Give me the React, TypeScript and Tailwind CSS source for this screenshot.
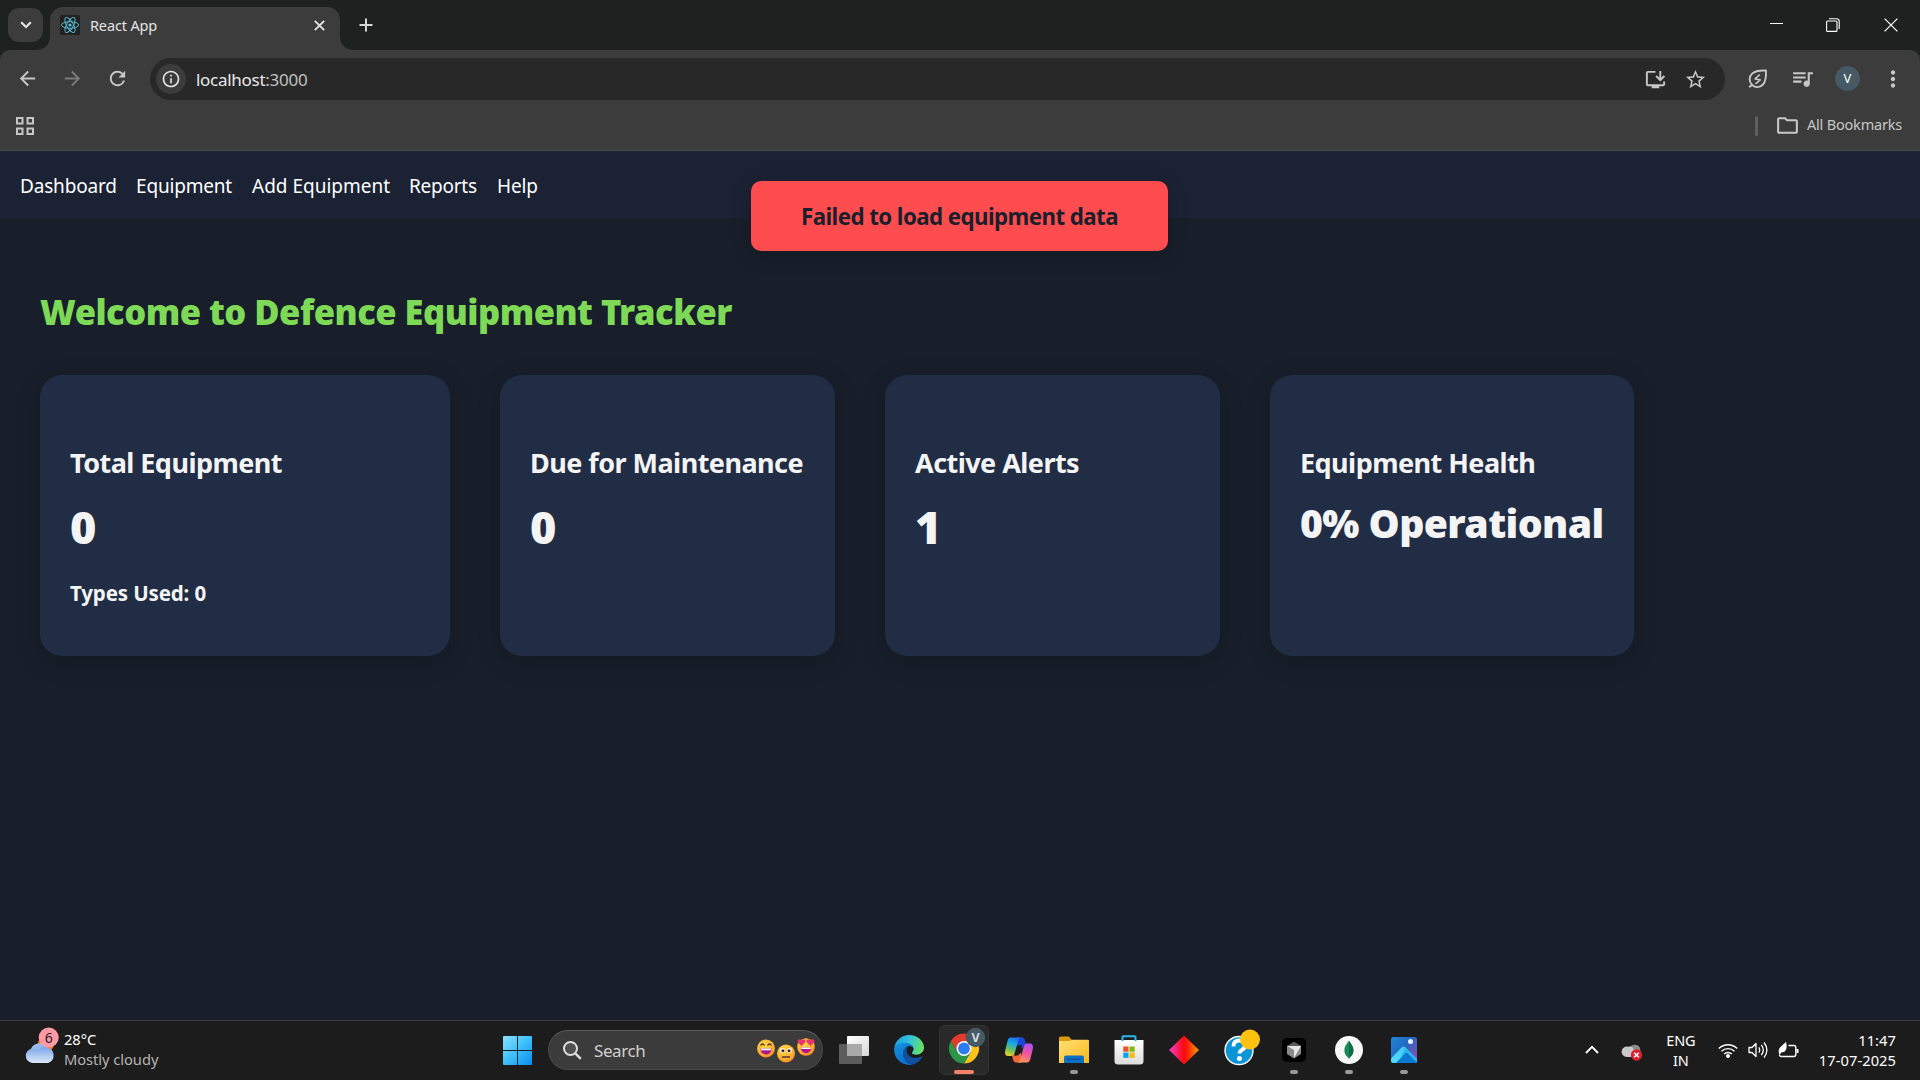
import React from "react";
import {
  MdArrowBack,
  MdArrowForward,
  MdRefresh,
  MdInfoOutline,
  MdOutlineInstallDesktop,
  MdStarBorder,
  MdQueueMusic,
  MdMoreVert,
  MdOutlineFolder,
} from "react-icons/md";

function ReactLogo() {
  return (
    <svg className="h-5 w-5 shrink-0" viewBox="0 0 20 20" fill="none" stroke="#58c4dc" strokeWidth="0.9">
      <rect width="20" height="20" rx="1.5" fill="#222222" stroke="none" />
      <ellipse cx="10" cy="10" rx="8.6" ry="3.3" />
      <ellipse cx="10" cy="10" rx="8.6" ry="3.3" transform="rotate(60 10 10)" />
      <ellipse cx="10" cy="10" rx="8.6" ry="3.3" transform="rotate(120 10 10)" />
      <circle cx="10" cy="10" r="1.6" fill="#58c4dc" stroke="none" />
    </svg>
  );
}

function TabStrip() {
  return (
    <div className="flex h-[50px] items-start bg-[#1f2120] text-[#e3e3e3]">
      <div className="ml-2 mt-2 flex h-[34px] w-[35px] items-center justify-center rounded-[11px] bg-[#3c3c3c]">
        <svg className="h-[8px] w-[12px]" viewBox="0 0 12 8" fill="none" stroke="#e3e3e3" strokeWidth="2.2">
          <path d="M1.2 1.2 6 6l4.800-4.800" />
        </svg>
      </div>
      <svg className="mt-[35px] -ml-[8px] h-[15px] w-[15px]" viewBox="0 0 15 15">
        <path d="M15 0v15H0Q15 15 15 0Z" fill="#3c3c3c" />
      </svg>
      <div className="mt-[7px] flex h-[43px] w-[290px] items-center rounded-t-[13px] bg-[#3c3c3c] pb-[7px] pl-[10px]">
        <ReactLogo />
        <span className="mt-px ml-[10px] text-[14.5px] tracking-[-0.15px]">React App</span>
        <svg className="ml-auto mr-[15px] h-[11px] w-[11px]" viewBox="0 0 11 11" stroke="#e3e3e3" strokeWidth="1.900">
          <path d="m.8.8 9.400 9.400M10.200.8.8 10.200" />
        </svg>
      </div>
      <svg className="mt-[35px] h-[15px] w-[15px]" viewBox="0 0 15 15">
        <path d="M0 0v15h15Q0 15 0 0Z" fill="#3c3c3c" />
      </svg>
      <svg className="mt-[18px] ml-[4px] h-[14px] w-[14px]" viewBox="0 0 14 14" stroke="#d6d6d6" strokeWidth="2">
        <path d="M7 .5v13M.5 7h13" />
      </svg>
      <div className="ml-auto mr-[22px] flex h-[50px] items-center">
        <svg className="h-[14px] w-[13px]" viewBox="0 0 13 14" stroke="#fff" strokeWidth="1">
          <path d="M0 5.500h13" />
        </svg>
        <svg className="ml-[43px] h-[14px] w-[14px]" viewBox="0 0 14 14" fill="none" stroke="#fff" strokeWidth="1.100">
          <rect x=".6" y="3" width="10.400" height="10.400" rx="1" />
          <path d="M3 .8h7.500a2.700 2.700 0 0 1 2.700 2.700V11" />
        </svg>
        <svg className="ml-[44px] h-[14px] w-[14px]" viewBox="0 0 14 14" stroke="#fff" strokeWidth="1.200">
          <path d="m.6.6 12.800 12.800M13.400.6.6 13.400" />
        </svg>
      </div>
    </div>
  );
}

function EnergyLeaf() {
  return (
    <svg className="h-5 w-5" viewBox="0 0 20 20" fill="none" stroke="#c7c7c7" strokeWidth="1.900">
      <path d="M1.200 18.300 4 15.800" />
      <path d="M4 15.800C.6 12.500 1 7.500 4.100 4.600 7.200 1.800 12 1.200 17.900 1.500c.4 5.900-.1 10.800-2.900 14-2.900 3.200-7.700 3.600-11 .3Z" />
      <path d="m11.800 5.600-5 4.400 5.700.7-5 4.200" strokeWidth="1.600" strokeLinejoin="bevel" />
    </svg>
  );
}

function Toolbar() {
  return (
    <div className="bg-[#1f2120]">
      <div className="flex h-[58px] items-center rounded-t-[10px] bg-[#3c3c3c] text-[#c7c7c7]">
        <MdArrowBack className="-mt-px ml-[16px] size-[23px]" />
        <MdArrowForward className="-mt-px ml-[22px] size-[23px] text-[#7a7a7a]" />
        <MdRefresh className="-mt-px ml-[22px] size-[23px]" />
        <div className="ml-[21px] flex h-[42px] w-[1575px] items-center rounded-full bg-[#282828] pl-[6px]">
          <div className="flex size-[30px] items-center justify-center rounded-full bg-[#3c3c3c]">
            <MdInfoOutline className="size-[20px] text-[#e3e3e3]" />
          </div>
          <span className="mt-px ml-[10px] text-[17px] tracking-[-0.28px] text-[#c0c0c0]">
            <span className="text-[#e8e8e8]">localhost</span>:3000
          </span>
          <MdOutlineInstallDesktop className="ml-auto size-[23px]" />
          <MdStarBorder className="mr-[18px] ml-[17px] size-[23px]" />
        </div>
        <div className="-mt-px ml-[23px]">
          <EnergyLeaf />
        </div>
        <MdQueueMusic className="-mt-[2px] ml-[22px] size-[25px]" />
        <div className="-mt-px ml-[20px] flex size-[25px] items-center justify-center rounded-full bg-[#455a64] text-[13px] text-white">
          V
        </div>
        <MdMoreVert className="-mt-px ml-[20px] size-[26px]" />
      </div>
      <div className="flex h-[43px] items-center border-b border-[#4a4a4a] bg-[#3c3c3c] pb-[12px] text-[#c7c7c7]">
        <svg className="mt-[5px] ml-[16px] h-[18px] w-[18px]" viewBox="0 0 18 18" fill="none" stroke="#c7c7c7" strokeWidth="2">
          <rect x="1" y="1" width="5.500" height="5.500" />
          <rect x="11.500" y="1" width="5.500" height="5.500" />
          <rect x="1" y="11.500" width="5.500" height="5.500" />
          <rect x="11.500" y="11.500" width="5.500" height="5.500" />
        </svg>
        <div className="mt-[5px] ml-auto h-[20px] w-[3px] rounded-full bg-[#5f5f5f]" />
        <MdOutlineFolder className="mt-[5px] ml-[17px] size-[25px]" />
        <span className="mt-[4px] mr-[18px] ml-[7px] text-[14.5px] tracking-[-0.2px]">All Bookmarks</span>
      </div>
    </div>
  );
}

function Toast() {
  return (
    <div className="absolute top-[30px] left-[751px] flex h-[70px] w-[417px] items-center justify-center rounded-[10px] bg-[#ff4d4f] pt-px text-[22.3px] font-bold tracking-[-0.57px] whitespace-nowrap text-[#1a1f2b] shadow-[0_4px_20px_rgba(0,0,0,0.2)]">
      Failed to load equipment data
    </div>
  );
}

function NavBar() {
  return (
    <nav className="flex h-[67px] items-center gap-5 bg-[#1a2234] px-5 pt-[3px] text-[19px] tracking-[-0.18px] whitespace-nowrap text-white">
      <a className="w-[96px]">Dashboard</a>
      <a className="w-[96px]">Equipment</a>
      <a className="w-[137px] tracking-[0px]">Add Equipment</a>
      <a className="w-[68px] tracking-[-0.25px]">Reports</a>
      <a className="w-[41px]">Help</a>
    </nav>
  );
}

const cardClass =
  "h-[281px] rounded-[22px] bg-[#212d45] px-[30px] pt-[68px] whitespace-nowrap text-[#f4f4f4] shadow-[0_6px_24px_rgba(0,0,0,0.18)]";
const titleClass = "text-[27px] leading-[40px] font-bold tracking-[-0.54px]";
const numberClass = "mt-[14px] text-[45px] leading-[60px] font-black";

function Dashboard() {
  return (
    <main className="h-[802px] bg-[#181f2a] px-10 pt-[69px]">
      <h1 className="text-[34.500px] leading-[50px] font-black tracking-[-0.5px] text-[#7ed957]">
        Welcome to Defence Equipment Tracker
      </h1>
      <div className="mt-[38px] flex gap-[50px]">
        <section className={`${cardClass} w-[410px]`}>
          <h2 className={titleClass}>Total Equipment</h2>
          <p className={numberClass}>0</p>
          <p className="mt-[21px] text-[20.500px] leading-[30px] font-bold tracking-[-0.13px]">Types Used: 0</p>
        </section>
        <section className={`${cardClass} w-[335px]`}>
          <h2 className={titleClass}>Due for Maintenance</h2>
          <p className={numberClass}>0</p>
        </section>
        <section className={`${cardClass} w-[335px]`}>
          <h2 className={titleClass}>Active Alerts</h2>
          <p className={numberClass}>1</p>
        </section>
        <section className={`${cardClass} w-[364px]`}>
          <h2 className={titleClass}>Equipment Health</h2>
          <p className="mt-[13px] text-[39.200px] leading-[54px] font-black tracking-[-0.6px]">0% Operational</p>
        </section>
      </div>
    </main>
  );
}

function Weather() {
  return (
    <div className="flex items-start pt-[6px] pl-[24px]">
      <svg className="h-[37px] w-[36px]" viewBox="0 0 36 37">
        <defs>
          <linearGradient id="cloud" x1="0" y1="0" x2="0" y2="1">
            <stop offset="0" stopColor="#7ba6ea" />
            <stop offset="1" stopColor="#dbe8fb" />
          </linearGradient>
          <linearGradient id="cloudBack" x1="0" y1="0" x2="1" y2="1">
            <stop offset="0" stopColor="#a9c8f5" />
            <stop offset="1" stopColor="#6d97e0" />
          </linearGradient>
        </defs>
        <circle cx="22" cy="17" r="8" fill="#f7730c" />
        <path d="M6 25a10 10 0 0 1 18.500-4L27 30H8Z" fill="url(#cloudBack)" />
        <path d="M8.500 36a7.200 7.200 0 0 1-.6-14.300c2.500-.2 4.600.4 6.300 2A9.500 9.500 0 0 1 23 20.500a8 8 0 0 1 1 15.500Z" fill="url(#cloud)" />
        <circle cx="24.700" cy="10.500" r="10" fill="#ff99a4" />
        <text x="24.700" y="15.800" fontSize="14" textAnchor="middle" fill="#1c1c1c">6</text>
      </svg>
      <div className="mt-[2px] ml-[4px] text-[14.700px] leading-[20px] tracking-[-0.05px]">
        <div className="text-white">28°C</div>
        <div className="text-[#b4b4b4]">Mostly cloudy</div>
      </div>
    </div>
  );
}

function WindowsLogo() {
  return (
    <svg className="h-[29px] w-[29px]" viewBox="0 0 29 29">
      <defs>
        <linearGradient id="win" x1="0" y1="0" x2="29" y2="29" gradientUnits="userSpaceOnUse">
          <stop offset="0" stopColor="#8ae0ff" />
          <stop offset=".5" stopColor="#3cc0fb" />
          <stop offset="1" stopColor="#0a8cf0" />
        </linearGradient>
      </defs>
      <path d="M0 1q0-1 1-1h13v14H0ZM15 0h13q1 0 1 1v13H15ZM0 15h14v14H1q-1 0-1-1ZM15 15h14v13q0 1-1 1H15Z" fill="url(#win)" />
    </svg>
  );
}

function Emojis() {
  return (
    <svg className="h-[26px] w-[60px]" viewBox="0 0 60 26">
      <defs>
        <radialGradient id="face" cx=".4" cy=".3" r=".8">
          <stop offset="0" stopColor="#ffd84a" />
          <stop offset=".7" stopColor="#fbab2c" />
          <stop offset="1" stopColor="#f0722e" />
        </radialGradient>
      </defs>
      <circle cx="10" cy="10.500" r="9" fill="url(#face)" />
      <path d="M4.500 10.500h11c0 8-11 8-11 0Z" fill="#b4128c" />
      <path d="M5 10.500h10v1.800H5Z" fill="#fff" />
      <path d="M4.500 7.500q2-3 4 0M11.500 7.500q2-3 4 0" fill="none" stroke="#4b2b2e" strokeWidth="1.300" />
      <circle cx="30" cy="15.500" r="9" fill="url(#face)" />
      <circle cx="26.500" cy="12.500" r="2.400" fill="#fff" />
      <circle cx="33.500" cy="12.500" r="2.400" fill="#fff" />
      <circle cx="26.900" cy="12.700" r="1.500" fill="#3c2528" />
      <circle cx="33.100" cy="12.700" r="1.500" fill="#3c2528" />
      <path d="M26 19h8" stroke="#5a3330" strokeWidth="1.500" />
      <circle cx="50" cy="9" r="8.800" fill="url(#face)" />
      <path d="M44.800 9.500h10.400c0 7.500-10.400 7.500-10.400 0Z" fill="#b4128c" />
      <path d="M45.300 9.500h9.400v1.600h-9.400Z" fill="#fff" />
      <path d="M45.500 8 41.800 4.200C40.500 1.500 44 0 45.500 2.200 47.300 0 50.500 1.500 49.200 4.200ZM54.500 8l-3.700-3.800C49.500 1.500 53 0 54.500 2.200 56.300 0 59.500 1.500 58.200 4.200Z" fill="#f0306a" />
    </svg>
  );
}

function SearchBox() {
  return (
    <div className="flex h-[40px] w-[275px] items-center rounded-full border border-[#4a4a4a] border-t-[#5c5c5c] bg-[#3b3b3b] pl-[14px]">
      <svg className="h-[19px] w-[19px]" viewBox="0 0 19 19" fill="none" stroke="#dedede" strokeWidth="2">
        <circle cx="7.500" cy="7.500" r="6.500" fill="#505050" />
        <path d="m12.300 12.300 5.500 5.500" strokeWidth="2.400" />
      </svg>
      <span className="mt-px ml-[12px] text-[17px] tracking-[-0.4px] text-[#d0d0d0]">Search</span>
      <div className="mt-[1px] mr-[6px] ml-auto">
        <Emojis />
      </div>
    </div>
  );
}

function TaskView() {
  return (
    <svg className="h-[30px] w-[32px]" viewBox="0 0 32 30">
      <defs>
        <linearGradient id="tv" x1="0" y1="0" x2="1" y2="1">
          <stop offset="0" stopColor="#fff" />
          <stop offset="1" stopColor="#d6d6d6" />
        </linearGradient>
      </defs>
      <rect x="1" y="9" width="23" height="20" rx="1" fill="#5c5c5c" />
      <rect x="9" y="1" width="22" height="20" rx="1" fill="url(#tv)" />
      <path d="M9 9h15v12H9Z" fill="#a9a9a9" />
    </svg>
  );
}

function Edge() {
  return (
    <svg className="h-[30px] w-[30px]" viewBox="0 0 30 30">
      <defs>
        <linearGradient id="edgeTop" x1="0" y1=".4" x2="1" y2=".6">
          <stop offset="0" stopColor="#1f9fe0" />
          <stop offset=".5" stopColor="#36c6d6" />
          <stop offset="1" stopColor="#6be35a" />
        </linearGradient>
        <linearGradient id="edgeLeft" x1="0" y1="0" x2=".5" y2="1">
          <stop offset="0" stopColor="#1592dd" />
          <stop offset="1" stopColor="#0a6fd0" />
        </linearGradient>
      </defs>
      <path d="M.3 12.500C1.500 5.500 7.500 0 15 0c8.500 0 15 6 15 12.500 0 4.500-3.500 7.200-7.500 7.200-3.400 0-5-1-4.600-2.200.5-1.100 1.500-1.700 1.500-4 0-2-2.500-4.700-7-4.700C6.500 8.800 2.500 11 .3 12.500Z" fill="url(#edgeTop)" />
      <path d="M.2 13C2 9.500 6.200 7.800 11 7.800c4.800 0 8.400 2.700 8.400 5.700-1-1.500-2.500-2.400-4.400-2.400C11 11.500 9 16 9.500 20c.6 4.500 4 8.500 8.500 9.700C8.500 31.500-.8 24 .2 13Z" fill="url(#edgeLeft)" />
      <path d="M13.300 11.500C9.500 13 8.300 17.500 9.300 21.500c1 4 4.200 7.400 8.700 8.200 4.500-.9 8.200-3.700 10.200-7.400.3-.6-.2-1-.8-.7-5.900 2.900-14 .9-14.400-5.700 0-1.700.7-3.400 2-4.500Z" fill="#11509f" />
      <path d="M14.700 11.300c2.600-.3 4.700 1.300 4.700 2.900 0 1.800-1.300 2.500-1.500 3.400-1.500 1.800-1 2.900-.5 4.100-5.200-2.200-6.200-8.200-2.700-10.400Z" fill="#1c1c1c" />
    </svg>
  );
}

function Chrome() {
  return (
    <svg className="h-[38px] w-[38px]" viewBox="0 0 38 38">
      <g transform="translate(16 21.500)">
        <path d="M-13-7.500A15 15 0 0 1 13-7.500L0-7.500-6.500 3.750Z" fill="#e33b2e" />
        <path d="M13-7.500A15 15 0 0 1 0 15L6.500 3.750 0-7.500Z" fill="#fcc21b" />
        <path d="M0 15A15 15 0 0 1-13-7.500L-6.500 3.750 0 7.500 6.500 3.750Z" fill="#2b9648" />
        <circle r="7.500" fill="#fff" />
        <circle r="5.900" fill="#2c7bf0" />
      </g>
      <circle cx="27.500" cy="10.500" r="9.700" fill="#455a64" />
      <text x="27.500" y="15" fontSize="12.500" fontWeight="700" textAnchor="middle" fill="#d5dce0">V</text>
    </svg>
  );
}

function Copilot() {
  return (
    <svg className="h-[28px] w-[30px]" viewBox="0 0 30 28">
      <defs>
        <linearGradient id="cpA" x1=".6" y1="0" x2=".3" y2="1">
          <stop offset="0" stopColor="#1b6ef0" />
          <stop offset=".35" stopColor="#18a9e2" />
          <stop offset=".7" stopColor="#6fc15d" />
          <stop offset="1" stopColor="#e9cf2a" />
        </linearGradient>
        <linearGradient id="cpB" x1=".7" y1="0" x2=".3" y2="1">
          <stop offset="0" stopColor="#b04ff0" />
          <stop offset=".5" stopColor="#f0569a" />
          <stop offset="1" stopColor="#ff9a5a" />
        </linearGradient>
      </defs>
      <path d="M13 1.500h5c2.500 0 3 2 3.700 6H26l-9 5-5-3Z" fill="#1b45d4" />
      <path d="M8 19c.8 5 1.500 7.500 4.500 7.500h5.500L17 17Z" fill="#f2663a" />
      <path d="m13 9.500 5-.5-3 10-4.500 1Z" fill="#1c1c1c" />
      <path d="M7 1.500h11c-2.500 0-3.300 1.500-4 4l-3 10.500c-.8 2.800-1.800 4-4.500 4H4C1.500 20 .5 18 1.200 14.500L3.500 5C4.200 2.500 5 1.500 7 1.500Z" fill="url(#cpA)" />
      <path d="M23 26.500H12.500c2.500 0 3.200-1.500 4-4L19.300 12c.7-2.700 1.700-4.500 4.300-4.500H26c2.500 0 3.500 2 2.800 5.500L26.500 22.500c-.7 2.800-1.500 4-3.500 4Z" fill="url(#cpB)" />
    </svg>
  );
}

function Explorer() {
  return (
    <svg className="h-[28px] w-[30px]" viewBox="0 0 30 28">
      <defs>
        <linearGradient id="fold" x1="0" y1="0" x2="1" y2="1">
          <stop offset="0" stopColor="#ffe07a" />
          <stop offset="1" stopColor="#fbb917" />
        </linearGradient>
      </defs>
      <path d="M0 2Q0 .5 1.500.5h8.200L13 4H30v8H0Z" fill="#dc9a09" />
      <path d="M0 5h10.500L13 3.800h15.500q1.500 0 1.500 1.500V27H0Z" fill="url(#fold)" />
      <path d="M5 27v-5.500q0-2 2-2h16q2 0 2 2V27Z" fill="#0c70c8" />
      <path d="M8.500 23.200h13" stroke="#084b8a" strokeWidth="1.200" />
    </svg>
  );
}

function Store() {
  return (
    <svg className="h-[30px] w-[30px]" viewBox="0 0 30 30">
      <defs>
        <linearGradient id="st" x1="0" y1="0" x2="0" y2="1">
          <stop offset="0" stopColor="#fff" />
          <stop offset="1" stopColor="#dcdcdc" />
        </linearGradient>
      </defs>
      <path d="M.5 5h29V26q0 3.500-3.500 3.500H4Q.5 29.500.5 26Z" fill="url(#st)" />
      <path d="M8.500 6V2q0-.8.800-.8h11.400q.8 0 .8.800v4" fill="none" stroke="#2bb5ec" strokeWidth="2" />
      <path d="M9.300 11.500h5.200v5.200H9.300Z" fill="#f04f25" />
      <path d="M15.500 11.500h5.200v5.200h-5.200Z" fill="#80ba08" />
      <path d="M9.300 17.600h5.200v5.200H9.300Z" fill="#06a4ee" />
      <path d="M15.500 17.600h5.200v5.200h-5.200Z" fill="#feb906" />
    </svg>
  );
}

function Diamond() {
  return (
    <svg className="h-[30px] w-[30px]" viewBox="0 0 30 30">
      <defs>
        <linearGradient id="dia">
          <stop offset="0" stopColor="#f43fd0" />
          <stop offset=".48" stopColor="#fb0a12" />
          <stop offset=".6" stopColor="#fa1a08" />
          <stop offset="1" stopColor="#ff9d00" />
        </linearGradient>
      </defs>
      <path d="m15 .5 15 14.500-15 14.500L0 15Z" fill="url(#dia)" />
    </svg>
  );
}

function HelpIcon() {
  return (
    <svg className="h-[37px] w-[36px]" viewBox="0 0 36 37">
      <circle cx="15" cy="21.500" r="14" fill="#0a95d6" stroke="#fff" strokeWidth="1.400" />
      <path d="M9.500 17.500q0-6 5.800-6t5.700 4.900q0 2.800-3 4.500-2.500 1.400-2.500 3.600" fill="none" stroke="#fff" strokeWidth="3.800" />
      <circle cx="15.400" cy="29.500" r="2.500" fill="#fff" />
      <circle cx="26" cy="10.500" r="10" fill="#ffc20e" />
    </svg>
  );
}

function CursorApp() {
  return (
    <svg className="h-[26px] w-[26px]" viewBox="0 0 26 26">
      <rect x="1" y="1" width="24" height="24" rx="5" fill="#000" />
      <path d="m13 5 7 4v8l-7 4.500L6 17V9Z" fill="#8a8a8a" />
      <path d="m13 5 7 4-7 3-7-3Z" fill="#5a5a5a" />
      <path d="M6 9h14l-7 12v-8Z" fill="#e6e6e6" />
    </svg>
  );
}

function Mongo() {
  return (
    <svg className="h-[28px] w-[28px]" viewBox="0 0 28 28">
      <circle cx="14" cy="14" r="14" fill="#f7f7f7" />
      <path d="M14 4.500c1.500 3 4.600 5 4.600 9.800 0 4-2.500 6.500-4.200 7.700l-.4 2Z" fill="#0e6b47" />
      <path d="M14 4.500c-1.500 3-4.600 5-4.600 9.800 0 4 2.500 6.500 4.200 7.700l.4 2Z" fill="#178a56" />
    </svg>
  );
}

function Photos() {
  return (
    <svg className="h-[26px] w-[26px]" viewBox="0 0 26 26">
      <defs>
        <linearGradient id="ph" x1="0" y1="0" x2="1" y2=".8">
          <stop offset="0" stopColor="#1f86dc" />
          <stop offset=".5" stopColor="#2468c0" />
          <stop offset="1" stopColor="#8a4bb0" />
        </linearGradient>
        <linearGradient id="mt" x1="0" y1="1" x2="1" y2="0">
          <stop offset="0" stopColor="#52dcfb" />
          <stop offset="1" stopColor="#3cc4f5" />
        </linearGradient>
        <clipPath id="phc">
          <rect width="26" height="26" rx="2.500" />
        </clipPath>
      </defs>
      <g clipPath="url(#phc)">
        <rect width="26" height="26" fill="url(#ph)" />
        <path d="M0 21.500 10.500 10.500q2-2 4.200 0L26 22v4H0Z" fill="url(#mt)" />
        <path d="m5 26 9-9.500q1.500-1.500 3 0L26 25.500V26Z" fill="#0b78d4" />
        <path d="m14.700 10.500 11.300 11.500V25.500l-9-9q-1.500-1.500-3 0L9 21.800Z" fill="#1b9fe9" opacity=".55" />
        <circle cx="19.500" cy="4.500" r="2.500" fill="#eaf3ff" />
      </g>
    </svg>
  );
}

function TaskButton({ children, running, active }: { children: React.ReactNode; running?: boolean; active?: boolean }) {
  return (
    <div
      className={`relative flex size-[50px] items-center justify-center rounded-[6px] ${
        active ? "border border-[#343434] bg-[#292929]" : ""
      }`}
    >
      {children}
      {running && <span className="absolute bottom-[1px] left-[21px] h-[4px] w-[8px] rounded-full bg-[#9a9a9a]" />}
      {active && <span className="absolute bottom-0 left-[14px] h-[4px] w-[20px] rounded-full bg-[#f4806a]" />}
    </div>
  );
}

function Tray() {
  return (
    <div className="ml-auto flex h-[57px] items-center text-white">
      <svg className="h-[9px] w-[14px]" viewBox="0 0 14 9" fill="none" stroke="#fff" strokeWidth="1.800">
        <path d="M1 8 7 1.800 13 8" />
      </svg>
      <svg className="mt-[4px] ml-[22px] h-[18px] w-[22px]" viewBox="0 0 22 18">
        <path d="M8 6a6 6 0 0 1 11-1l1 8H8Z" fill="#8c8c8c" />
        <path d="M6 14a5.200 5.200 0 1 1 1.200-10.200Q12 2.500 13 8l2 6Z" fill="#c9c9c9" />
        <circle cx="15.500" cy="12" r="5.700" fill="#d9222e" />
        <path d="m13.200 9.700 4.600 4.600M17.800 9.700l-4.600 4.600" stroke="#fff" strokeWidth="1.500" />
      </svg>
      <div className="ml-[18px] w-[40px] text-center text-[14.500px] leading-[20px] tracking-[-0.2px]">
        <div>ENG</div>
        <div>IN</div>
      </div>
      <svg className="ml-[17px] h-[16px] w-[20px]" viewBox="0 0 20 16" fill="none" stroke="#fff" strokeWidth="1.400">
        <path d="M.8 6.500a13 13 0 0 1 18.400 0" />
        <path d="M3.500 9.300a9.200 9.200 0 0 1 13 0" />
        <path d="M6.200 12a5.400 5.400 0 0 1 7.600 0" />
        <circle cx="10" cy="14" r="1.300" fill="#fff" />
      </svg>
      <svg className="mt-px ml-[10px] h-[18px] w-[20px]" viewBox="0 0 20 18" fill="none" stroke="#fff" strokeWidth="1.300">
        <path d="M1 6.500h3l4-4v13l-4-4H1Z" strokeLinejoin="round" />
        <path d="M10.800 6.300q1.800 2.700 0 5.400M13.300 3.800q4 5.200 0 10.400M16 1.500q5.800 7.500 0 15" />
      </svg>
      <svg className="ml-[10px] h-[18px] w-[21px]" viewBox="0 0 21 18" fill="none" stroke="#fff" strokeWidth="1.400">
        <path d="M10.500 4.500h5.300q2 0 2 2v7q0 2-2 2H3.500q-2 0-2-1.800" />
        <path d="M19.500 8v4" strokeWidth="2" />
        <path d="M1 12.500C-.5 6.500 4 5.500 8 .8c1.500 5.500.5 10.500-4.500 10.500L1.500 14Z" fill="#fff" stroke="none" />
      </svg>
      <div className="mr-[24px] ml-[20px] text-right text-[14.700px] leading-[20px] tracking-[0.05px]">
        <div>11:47</div>
        <div>17-07-2025</div>
      </div>
    </div>
  );
}

function Taskbar() {
  return (
    <div className="flex h-[60px] border-t border-[#3d3d3d] bg-[#1c1c1c]">
      <div className="w-[503px]">
        <Weather />
      </div>
      <div className="flex h-[58px] items-center">
        <WindowsLogo />
        <div className="mr-[6px] ml-[16px]">
          <SearchBox />
        </div>
        <div className="flex gap-[5px]">
          <TaskButton><TaskView /></TaskButton>
          <TaskButton><Edge /></TaskButton>
          <TaskButton active><div className="-mt-[8px] ml-[5px]"><Chrome /></div></TaskButton>
          <TaskButton><Copilot /></TaskButton>
          <TaskButton running><Explorer /></TaskButton>
          <TaskButton><Store /></TaskButton>
          <TaskButton><Diamond /></TaskButton>
          <TaskButton><div className="-mt-[6px] ml-[6px]"><HelpIcon /></div></TaskButton>
          <TaskButton running><CursorApp /></TaskButton>
          <TaskButton running><Mongo /></TaskButton>
          <TaskButton running><Photos /></TaskButton>
        </div>
      </div>
      <Tray />
    </div>
  );
}

export default function App() {
  return (
    <div className="h-[1080px] w-[1920px] overflow-hidden bg-[#181f2a] font-['Noto_Sans','Open_Sans',sans-serif]">
      <TabStrip />
      <Toolbar />
      <div className="relative">
        <NavBar />
        <Dashboard />
        <Toast />
      </div>
      <Taskbar />
    </div>
  );
}
